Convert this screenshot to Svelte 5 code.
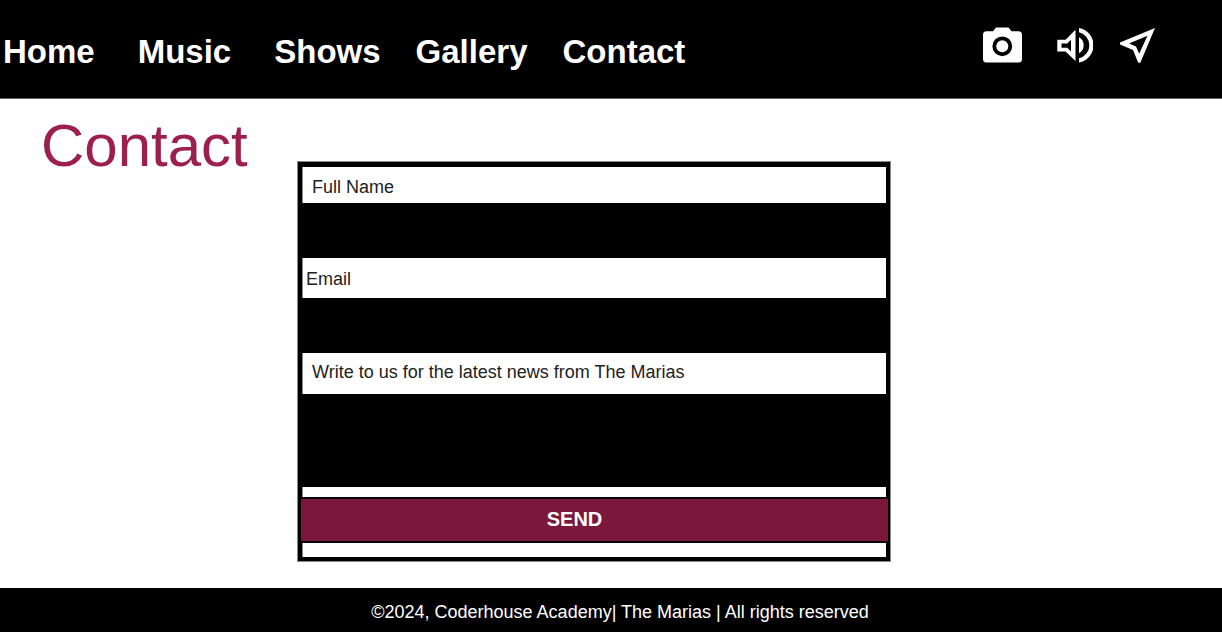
<script>
  const links = ['Home', 'Music', 'Shows', 'Gallery', 'Contact'];
  let fullName = $state('');
  let email = $state('');
  let message = $state('');
</script>

<div class="page">
  <header>
    <nav aria-label="Main">
      {#each links as link}
        <a href={'#' + link.toLowerCase()}>{link}</a>
      {/each}
    </nav>
    <div class="social">
      <a href="#photos" aria-label="Photos">
        <svg width="40" height="36" viewBox="0 0 40 36" fill="#fff">
          <path fill-rule="evenodd" d="M14 0.500H26.500L29.500 4.200H36.500Q40 4.200 40 7.700V32Q40 35.500 36.500 35.500H4.500Q1 35.500 1 32V7.700Q1 4.200 4.500 4.200H11ZM20.300 9.400A9.900 9.900 0 1 0 20.300 29.200A9.900 9.900 0 1 0 20.300 9.400Z" />
          <circle cx="20.300" cy="19.300" r="6" />
        </svg>
      </a>
      <a href="#audio" aria-label="Audio">
        <svg width="36" height="36" viewBox="0 0 36 36" fill="#fff">
          <path fill-rule="evenodd" d="M0.300 12.700H8.500L18.500 2.800V34L8.500 24.500H0.300ZM4.500 16.500V20.700H10.300L14 24.500V12.700L10.300 16.500Z" />
          <path d="M22 1A17.500 17.500 0 0 1 22 35.500V31.300A13.400 13.400 0 0 0 22 5.200Z" />
          <path d="M22 10.300A9.200 9.200 0 0 1 22 26.300Z" />
        </svg>
      </a>
      <a href="#location" aria-label="Location">
        <svg width="36" height="36" viewBox="0 0 36 36" fill="#fff">
          <path fill-rule="evenodd" d="M0 15.500L35 1L20.300 35.700H18.200L13 23L0 17.500ZM9 16.600L16 19.500L19.200 26.800L27.500 8.700Z" />
        </svg>
      </a>
    </div>
  </header>

  <main>
    <h1>Contact</h1>
    <form onsubmit={(event) => event.preventDefault()}>
      <label class="name" for="name">Full Name</label>
      <input id="name" type="text" bind:value={fullName} />
      <label class="email" for="email">Email</label>
      <input id="email" type="email" bind:value={email} />
      <label class="message" for="message">Write to us for the latest news from The Marias</label>
      <textarea id="message" bind:value={message}></textarea>
      <div class="action">
        <button type="submit">SEND</button>
      </div>
    </form>
  </main>

  <footer>©2024, Coderhouse Academy| The Marias | All rights reserved</footer>
</div>

<style>
  :global(body) {
    margin: 0;
    background: #fff;
  }
  .page {
    min-height: 100vh;
    display: flex;
    flex-direction: column;
    font-family: "Liberation Sans", Arial, sans-serif;
    font-size: 18px;
  }
  header {
    display: flex;
    justify-content: space-between;
    border-bottom: 1px solid #666;
    background: #000;
    padding: 27px 66px 26px 3px;
  }
  nav {
    display: flex;
    gap: 35px;
    padding-top: 5px;
  }
  nav a {
    color: #fff;
    font-size: 33px;
    font-weight: 700;
    line-height: 40px;
    text-decoration: none;
  }
  nav a:nth-child(-n + 2) {
    margin-right: 8px;
  }
  .social {
    display: flex;
    gap: 27px;
  }
  .social a:first-child {
    margin-right: 8px;
  }
  .social svg {
    display: block;
  }
  main {
    flex: 1;
    display: grid;
    grid-template-columns: 297fr 594fr 331fr;
    align-items: start;
  }
  h1 {
    margin: 13px 0 0 41px;
    color: #9c1f4e;
    font-size: 60px;
    font-weight: 400;
    line-height: 68px;
  }
  form {
    display: flex;
    flex-direction: column;
    margin: 62px 0 26px;
    padding: 5px 4px 4px;
    border: 1px solid #888;
    background: #000;
  }
  label {
    padding: 0 9px;
    border-left: 1px solid #888;
    background: #fff;
    color: #222;
    line-height: 38px;
  }
  .name {
    padding-top: 4px;
    line-height: 32px;
  }
  .email {
    padding: 2px 3px 0;
  }
  .message {
    padding-bottom: 3px;
  }
  input,
  textarea {
    box-sizing: border-box;
    width: 100%;
    height: 55px;
    margin: 0;
    padding: 8px 10px;
    border: 0;
    background: #000;
    color: #fff;
    font: inherit;
    resize: none;
  }
  textarea {
    display: block;
    height: 93px;
  }
  .action {
    padding: 10px 0 14px;
    border-left: 1px solid #888;
    background: #fff;
  }
  button {
    display: block;
    width: calc(100% + 4px);
    margin: 0 -2px;
    padding: 0 40px 2px 0;
    border: 2px solid #000;
    border-width: 2px 0;
    background: #7a173a;
    color: #fff;
    font: 700 20px/40px "Liberation Sans", Arial, sans-serif;
  }
  footer {
    background: #000;
    color: #fff;
    line-height: 40px;
    padding: 4px 0 0 18px;
    text-align: center;
  }
</style>
